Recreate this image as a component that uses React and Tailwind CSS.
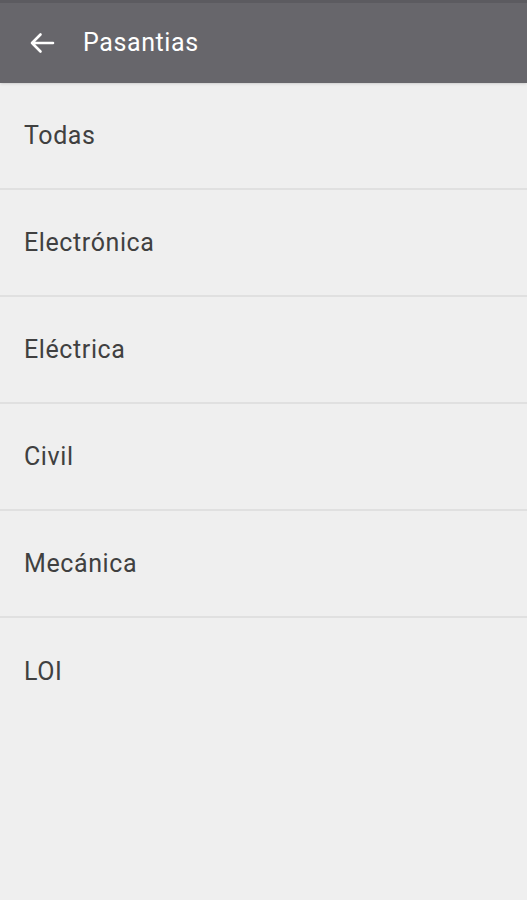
import React from 'react';

const categories = ['Todas', 'Electrónica', 'Eléctrica', 'Civil', 'Mecánica', 'LOI'];

export default function App() {
  return (
    <div
      className="min-h-[900px] w-full bg-[#efefef]"
      style={{ fontFamily: 'Roboto, "Noto Sans", sans-serif' }}
    >
      {/* Toolbar */}
      <header className="flex h-[83px] items-center border-t-[3px] border-[#5c5b60] bg-[#67666b] shadow-sm">
        <button className="ml-[28px] flex h-[24px] w-[28px] items-center justify-center text-white">
          <svg width="26" height="22" viewBox="0 0 26 22" fill="none">
            <path
              d="M24 11H3M11.5 2.5L3 11l8.5 8.5"
              stroke="currentColor"
              strokeWidth="2.6"
              strokeLinecap="round"
              strokeLinejoin="round"
            />
          </svg>
        </button>
        <h1 className="ml-[27px] text-[25px] tracking-[0.6px] text-white">Pasantias</h1>
      </header>

      {/* Category list */}
      <ul>
        {categories.map(name => (
          <li
            key={name}
            className="flex h-[107px] items-center border-b-2 border-[#e0e0e0] pl-[24px] text-[25px] tracking-[0.6px] text-[#404040] last:border-b-0"
          >
            {name}
          </li>
        ))}
      </ul>
    </div>
  );
}
